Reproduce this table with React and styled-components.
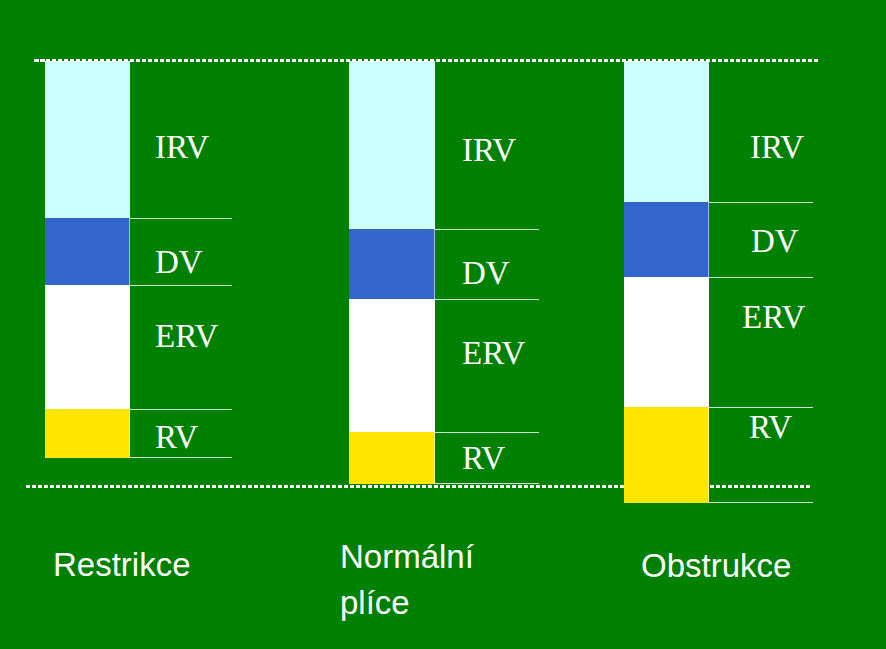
import React from "react";
import styled, { createGlobalStyle } from "styled-components";

const GlobalStyle = createGlobalStyle`
  html, body {
    margin: 0;
    padding: 0;
    background: #008000;
  }
`;

const Slide = styled.div`
  position: relative;
  width: 886px;
  height: 649px;
  overflow: hidden;
  background: #008000;
`;

const Chart = styled.div`
  position: relative;
  z-index: 1;
  display: flex;
  align-items: flex-start;
  padding-top: 61px;
`;

const Column = styled.div`
  display: flex;
  flex-direction: column;
  margin-left: ${(p) => p.$offset}px;
`;

const Stack = styled.div`
  display: flex;
  flex-direction: column;
  height: 470px;
`;

const Segment = styled.div`
  display: flex;
  height: ${(p) => p.$h}px;
`;

const BarCell = styled.div`
  box-sizing: border-box;
  width: ${(p) => p.$w}px;
  background: ${(p) => p.$color};
  border-right: 1px solid rgba(255, 255, 255, 0.55);
`;

const LabelCell = styled.div`
  box-sizing: border-box;
  width: ${(p) => p.$w}px;
  padding-top: ${(p) => p.$top}px;
  padding-left: ${(p) => p.$left}px;
  border-top: ${(p) => (p.$first ? "none" : "1px solid rgba(255, 255, 255, 0.8)")};
  border-bottom: ${(p) => (p.$last ? "1px solid rgba(255, 255, 255, 0.8)" : "none")};
  font-family: "Liberation Serif", "Times New Roman", serif;
  font-size: 33px;
  line-height: 1;
  color: #ffffff;
  white-space: nowrap;
`;

const Caption = styled.div`
  margin-top: ${(p) => p.$top}px;
  margin-left: ${(p) => p.$left}px;
  font-family: "Liberation Sans", Arial, sans-serif;
  font-size: 33px;
  line-height: 46px;
  color: #ffffff;
  white-space: nowrap;
`;

const DashedLine = styled.div`
  position: absolute;
  z-index: ${(p) => p.$z};
  left: ${(p) => p.$x1}px;
  top: ${(p) => p.$y}px;
  width: ${(p) => p.$x2 - p.$x1}px;
  height: 3px;
  border-radius: 1px;
  background: repeating-linear-gradient(
    to right,
    #ffffff 0,
    #ffffff 4.5px,
    transparent 4.5px,
    transparent 6px
  );
`;

const COLORS = {
  IRV: "#ccffff",
  DV: "#3366cc",
  ERV: "#ffffff",
  RV: "#ffe600",
};

const columns = [
  {
    name: "restrikce",
    offset: 45,
    barW: 85,
    labelW: 102,
    caption: ["Restrikce"],
    captionTop: 11,
    captionLeft: 8,
    segments: [
      { key: "IRV", h: 157, top: 70, left: 25 },
      { key: "DV", h: 67, top: 27, left: 25 },
      { key: "ERV", h: 124, top: 34, left: 25 },
      { key: "RV", h: 49, top: 11, left: 25 },
    ],
  },
  {
    name: "normal",
    offset: 117,
    barW: 86,
    labelW: 104,
    caption: ["Normální", "plíce"],
    captionTop: 3,
    captionLeft: -9,
    segments: [
      { key: "IRV", h: 168, top: 73, left: 27 },
      { key: "DV", h: 70, top: 27, left: 27 },
      { key: "ERV", h: 133, top: 37, left: 27 },
      { key: "RV", h: 52, top: 9, left: 27 },
    ],
  },
  {
    name: "obstrukce",
    offset: 85,
    barW: 85,
    labelW: 104,
    caption: ["Obstrukce"],
    captionTop: 12,
    captionLeft: 17,
    segments: [
      { key: "IRV", h: 141, top: 70, left: 41 },
      { key: "DV", h: 75, top: 22, left: 42 },
      { key: "ERV", h: 130, top: 23, left: 33 },
      { key: "RV", h: 96, top: 3, left: 40 },
    ],
  },
];

export default function App() {
  return (
    <>
      <GlobalStyle />
      <Slide>
        <DashedLine $x1={34} $x2={820} $y={59} $z={2} />
        <DashedLine $x1={26} $x2={811} $y={485} $z={0} />
        <Chart>
          {columns.map((col) => (
            <Column key={col.name} $offset={col.offset}>
              <Stack>
                {col.segments.map((seg, i) => (
                  <Segment key={seg.key} $h={seg.h}>
                    <BarCell $w={col.barW} $color={COLORS[seg.key]} />
                    <LabelCell
                      $w={col.labelW}
                      $top={seg.top}
                      $left={seg.left}
                      $first={i === 0}
                      $last={i === col.segments.length - 1}
                    >
                      {seg.key}
                    </LabelCell>
                  </Segment>
                ))}
              </Stack>
              <Caption $top={col.captionTop} $left={col.captionLeft}>
                {col.caption.map((line, i) => (
                  <div key={i}>{line}</div>
                ))}
              </Caption>
            </Column>
          ))}
        </Chart>
      </Slide>
    </>
  );
}
